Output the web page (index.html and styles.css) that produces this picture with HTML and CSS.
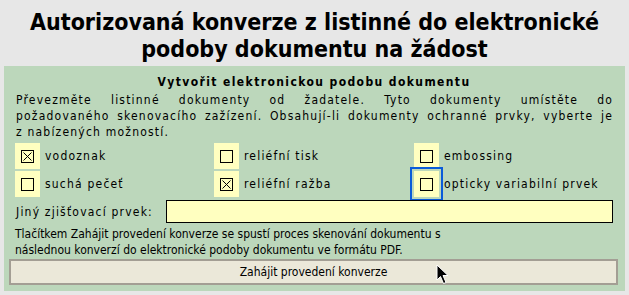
FILE: index.html
```html
<!DOCTYPE html>
<html lang="cs">
<head>
    <meta charset="UTF-8">
    <title>Autorizovaná konverze</title>
    <link rel="stylesheet" href="styles.css">
</head>
<body>

    <!--Titulek-->
    <h1>Autorizovaná konverze z listinné do elektronické podoby dokumentu na žádost</h1>

    <!--Panel konverze-->
    <section class="panel">
        <h2>Vytvořit elektronickou podobu dokumentu</h2>
        <p class="info">
            <span class="line-full">Převezměte listinné dokumenty od žadatele. Tyto dokumenty umístěte do</span>
            <span class="line-full">požadovaného skenovacího zažízení. Obsahují-li dokumenty ochranné prvky, vyberte je</span>
            <span class="line">z nabízených možností.</span>
        </p>

        <div class="options">
            <label class="opt"><span class="cb"><svg width="13" height="13" viewBox="0 0 13 13"><rect x="0.5" y="0.5" width="12" height="12" fill="none" stroke="#000"/><path d="M2.5 2.5 L10.5 10.5 M10.5 2.5 L2.5 10.5" stroke="#000" fill="none"/></svg></span>vodoznak</label>
            <label class="opt"><span class="cb"><svg width="13" height="13" viewBox="0 0 13 13"><rect x="0.5" y="0.5" width="12" height="12" fill="none" stroke="#000"/></svg></span>reliéfní tisk</label>
            <label class="opt"><span class="cb"><svg width="13" height="13" viewBox="0 0 13 13"><rect x="0.5" y="0.5" width="12" height="12" fill="none" stroke="#000"/></svg></span>embossing</label>
            <label class="opt"><span class="cb"><svg width="13" height="13" viewBox="0 0 13 13"><rect x="0.5" y="0.5" width="12" height="12" fill="none" stroke="#000"/></svg></span>suchá pečeť</label>
            <label class="opt"><span class="cb"><svg width="13" height="13" viewBox="0 0 13 13"><rect x="0.5" y="0.5" width="12" height="12" fill="none" stroke="#000"/><path d="M2.5 2.5 L10.5 10.5 M10.5 2.5 L2.5 10.5" stroke="#000" fill="none"/></svg></span>reliéfní ražba</label>
            <label class="opt"><span class="cb focus"><svg width="13" height="13" viewBox="0 0 13 13"><rect x="0.5" y="0.5" width="12" height="12" fill="none" stroke="#000"/></svg></span>opticky variabilní prvek</label>
        </div>

        <div class="other">
            <span>Jiný zjišťovací prvek:</span>
            <input type="text" class="other-input">
        </div>

        <p class="note">Tlačítkem Zahájit provedení konverze se spustí proces skenování dokumentu s<br>následnou konverzí do elektronické podoby dokumentu ve formátu PDF.</p>

        <div class="btn-wrap">
            <button class="start">Zahájit provedení konverze</button>
            <!--kurzor mysi-->
            <svg class="cursor" width="14" height="22" viewBox="0 0 14 22"><path d="M1 1 L1 16 L4.5 12.5 L7.5 19.5 L10 18.5 L7 11.5 L12 11.5 Z" fill="#000" stroke="#fff" stroke-width="1"/></svg>
        </div>
    </section>

</body>
</html>
```

FILE: styles.css
```css
/* ---------- ZAKLAD ---------- */
body {
    margin:0;
    background:#e7e7e7;
    font-family:"DejaVu Sans Condensed", "DejaVu Sans", sans-serif;
    font-size:12px;
    color:#000;
}

/* ---------- TITULEK ---------- */
h1 {
    margin:0;
    padding:9px 10px 3px;
    text-align:center;
    font-size:23px;
    line-height:27px;
    font-weight:bold;
}

/* ---------- PANEL ---------- */
.panel {
    margin:0 4px;
    background:#bcd7bb;
    padding:8px 12px 6px 11px;
}

.panel h2 {
    margin:0;
    font-size:12px;
    line-height:16px;
    text-align:center;
    font-weight:bold;
    letter-spacing:1.4px;
}

.info {
    margin:2px 0 0 1px;
    line-height:16px;
    letter-spacing:1.2px;
}

.info span { display:block; white-space:nowrap; }

/* radky zarovnane do bloku */
.info .line-full {
    white-space:normal;
    text-align:justify;
    text-align-last:justify;
}

/* ---------- CHECKBOXY ---------- */
.options {
    display:grid;
    grid-template-columns:199px 200px 1fr;
    row-gap:2px;
    margin-top:3px;
    letter-spacing:1.2px;
}

.opt {
    display:flex;
    align-items:center;
    gap:5px;
    height:26px;
}

.cb {
    width:25px;
    height:26px;
    background:#ffffc0;
    display:flex;
    align-items:center;
    justify-content:center;
}

.cb.focus {
    outline:2px solid #0a5bd9;
    outline-offset:2px;
}

/* ---------- JINY PRVEK ---------- */
.other {
    display:flex;
    align-items:center;
    margin-top:3px;
    padding-left:1px;
    letter-spacing:1.2px;
}

.other span { width:150px; }

.other-input {
    flex:1;
    height:23px;
    box-sizing:border-box;
    background:#ffffc0;
    border:1px solid #000;
    padding:0;
}

.note {
    margin:3px 0 0 0;
    line-height:16px;
}

/* ---------- TLACITKO ---------- */
.btn-wrap {
    position:relative;
    margin-top:1px;
}

.start {
    display:block;
    margin-left:-6px;
    width:calc(100% + 11px);
    height:26px;
    background:#ebe8d9;
    border:2px solid #a39e94;
    font-family:inherit;
    font-size:12px;
    color:#000;
}

.cursor {
    position:absolute;
    left:421px;
    top:5px;
}
```
